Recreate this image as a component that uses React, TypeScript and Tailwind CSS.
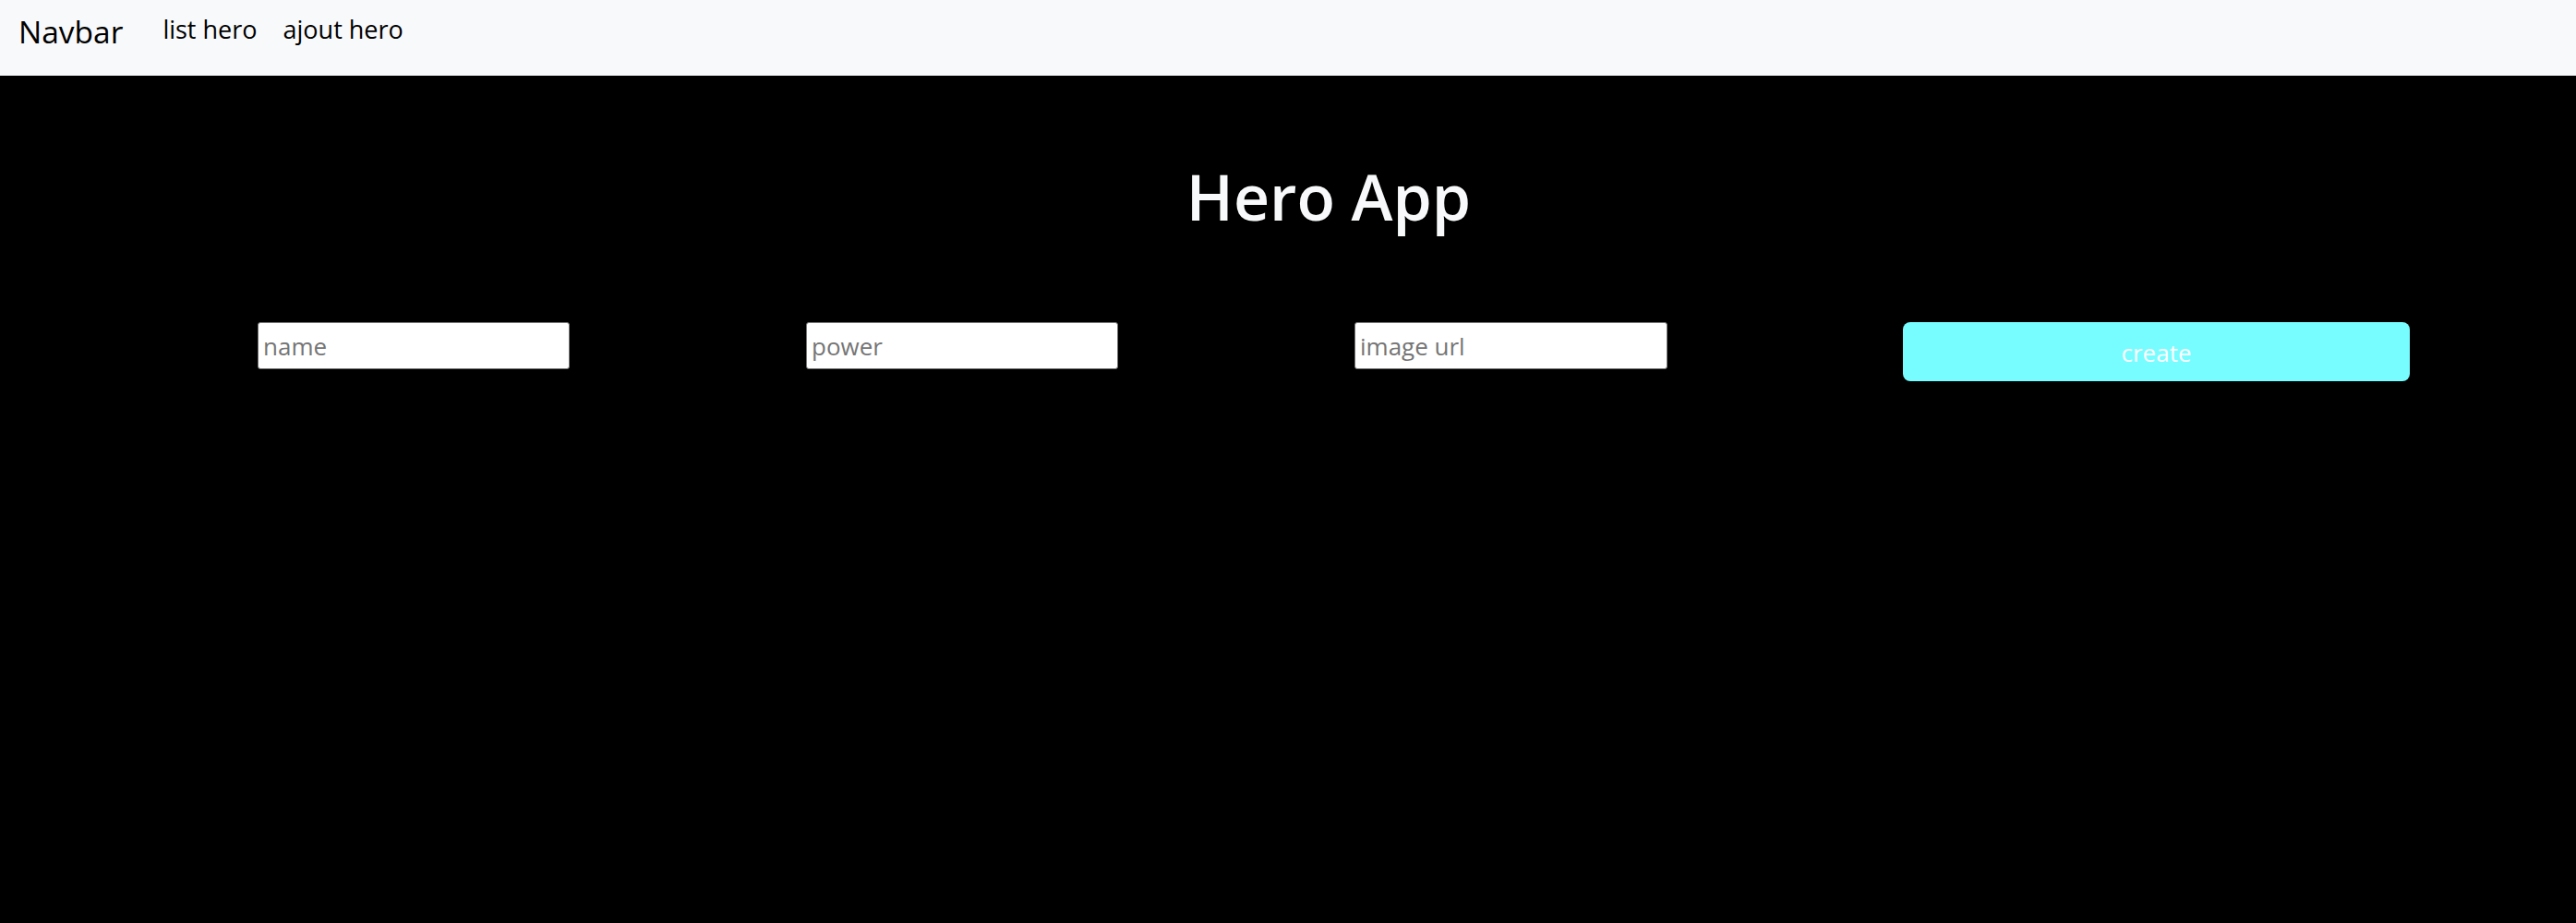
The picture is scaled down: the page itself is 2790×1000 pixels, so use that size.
import React from "react";

export default function App() {
  const font = { fontFamily: '"Open Sans", "Noto Sans", sans-serif' };
  return (
    <div className="min-h-[1000px] w-full bg-black" style={font}>
      <nav className="flex h-[82px] items-start bg-[#f8f9fa] px-[20px]">
        <a className="mt-[14px] text-[33.5px] leading-[40px] text-black">Navbar</a>
        <div className="ml-[43px] mt-[14px] flex gap-[28px]">
          <a className="text-[27px] leading-[36px] text-black">list hero</a>
          <a className="text-[27px] leading-[36px] text-black">ajout hero</a>
        </div>
      </nav>
      <main className="flex flex-col">
        <div className="flex justify-center pl-[88px] pt-[97px]">
          <h1 className="text-[68px] font-semibold leading-[68px] text-[#f8f9fa]">Hero App</h1>
        </div>
        <div className="ml-[279px] mt-[102px] grid grid-cols-[594px_594px_594px_549px] items-start">
          <input
            placeholder="name"
            className="h-[51px] w-[338px] rounded-[3px] border border-[#767676] bg-white px-[5px] text-[26px] text-black placeholder:text-[#757575] outline-none"
          />
          <input
            placeholder="power"
            className="h-[51px] w-[338px] rounded-[3px] border border-[#767676] bg-white px-[5px] text-[26px] text-black placeholder:text-[#757575] outline-none"
          />
          <input
            placeholder="image url"
            className="h-[51px] w-[339px] rounded-[3px] border border-[#767676] bg-white px-[5px] text-[26px] text-black placeholder:text-[#757575] outline-none"
          />
          <button className="h-[64px] w-[549px] rounded-[8px] bg-[#77fdff] pt-[3px] text-[26px] text-white">
            create
          </button>
        </div>
      </main>
    </div>
  );
}
